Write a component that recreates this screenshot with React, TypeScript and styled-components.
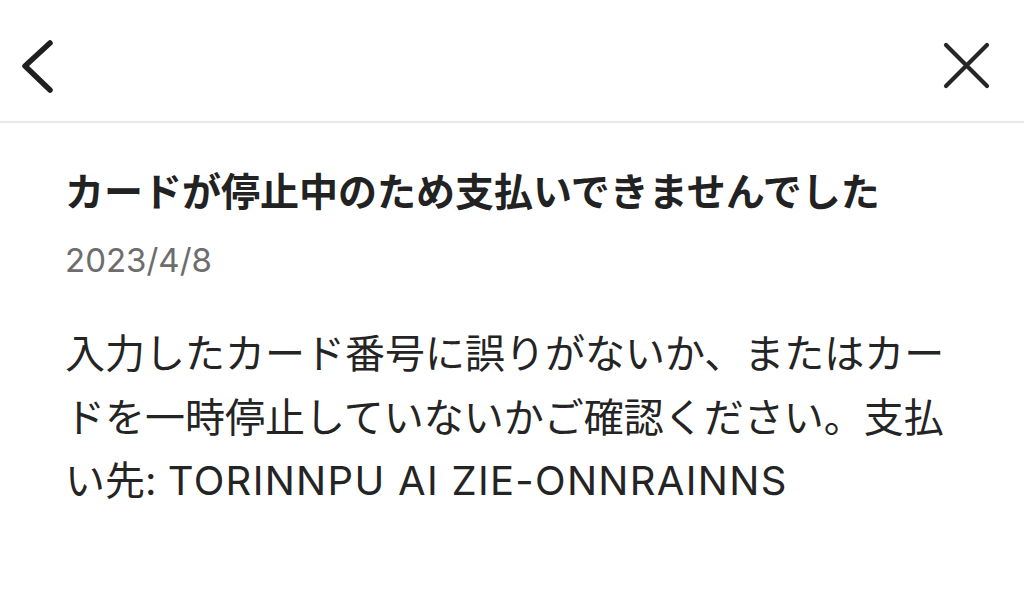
import React from "react";
import styled, { createGlobalStyle } from "styled-components";

const Global = createGlobalStyle`
  html, body { margin: 0; padding: 0; background: #ffffff; }
  body {
    font-family: "Inter", "Noto Sans CJK JP", sans-serif;
    -webkit-font-smoothing: antialiased;
  }
`;

const Page = styled.div`
  width: 1024px;
  height: 610px;
  background: #ffffff;
  display: flex;
  flex-direction: column;
  overflow: hidden;
`;

const Header = styled.header`
  height: 123px;
  box-sizing: border-box;
  padding: 38px 34px 0 18px;
  display: flex;
  align-items: flex-start;
  justify-content: space-between;
  border-bottom: 2px solid #e9e9e9;
  flex-shrink: 0;
`;

const IconButton = styled.button`
  border: none;
  background: transparent;
  padding: 0;
  margin: 0;
  display: flex;
  cursor: pointer;
`;

const Content = styled.main`
  padding: 38px 58px 0 65px;
  display: flex;
  flex-direction: column;
`;

const Title = styled.h1`
  margin: 0;
  font-family: "Noto Sans CJK JP", sans-serif;
  font-size: 39px;
  font-weight: 700;
  line-height: 56px;
  color: #222222;
`;

const DateText = styled.div`
  margin-top: 19px;
  font-family: "Inter", sans-serif;
  font-size: 33px;
  line-height: 48px;
  color: #6d6d6d;
`;

const Body = styled.p`
  margin: 38px 0 0;
  font-family: "Inter", "Noto Sans CJK JP", sans-serif;
  font-size: 40px;
  line-height: 63.5px;
  color: #242424;
  font-weight: 400;
`;

const Latin = styled.span`
  letter-spacing: 1.3px;
`;

const BackIcon = () => (
  <svg width="40" height="56" viewBox="0 0 40 56" fill="none">
    <path
      d="M32 5 L7 28 L32 52"
      stroke="#1f1f1f"
      strokeWidth="5.5"
      strokeLinecap="round"
      strokeLinejoin="round"
    />
  </svg>
);

const CloseIcon = () => (
  <svg width="48" height="56" viewBox="0 0 48 56" fill="none">
    <path
      d="M4 7 L45 48 M45 7 L4 48"
      stroke="#262626"
      strokeWidth="4.2"
      strokeLinecap="round"
    />
  </svg>
);

export default function App() {
  return (
    <>
      <Global />
      <Page>
        <Header>
          <IconButton aria-label="戻る">
            <BackIcon />
          </IconButton>
          <IconButton aria-label="閉じる">
            <CloseIcon />
          </IconButton>
        </Header>
        <Content>
          <Title>カードが停止中のため支払いできませんでした</Title>
          <DateText>2023/4/8</DateText>
          <Body>
            入力したカード番号に誤りがないか、またはカードを一時停止していないかご確認ください。支払い先:{" "}
            <Latin>TORINNPU AI ZIE-ONNRAINNS</Latin>
          </Body>
        </Content>
      </Page>
    </>
  );
}
